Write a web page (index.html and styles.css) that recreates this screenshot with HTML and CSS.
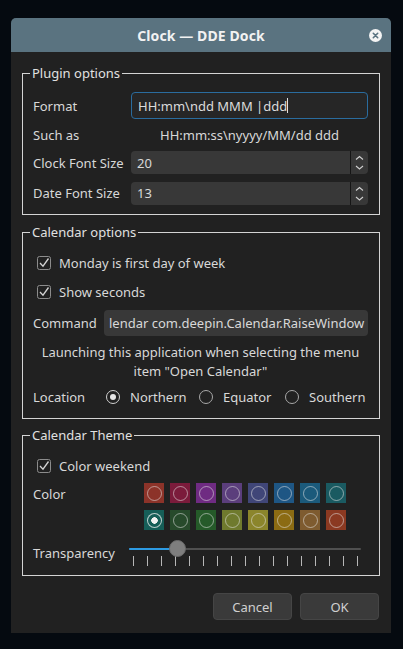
FILE: index.html
```html
<!DOCTYPE html>
<html>
<head>
<meta charset="utf-8">
<link rel="stylesheet" href="styles.css">
</head>
<body>
<div class="window">
  <div class="titlebar">
    <span></span>
    <span class="title">Clock — DDE Dock</span>
    <span class="close"><svg width="13" height="13" viewBox="0 0 13 13"><circle cx="6.5" cy="6.5" r="6.5" fill="#f4f4f4"/><path d="M4.3 4.3 L8.7 8.7 M8.7 4.3 L4.3 8.7" stroke="#5a7380" stroke-width="1.6" stroke-linecap="round"/></svg></span>
  </div>
  <div class="content">
    <fieldset class="group g1">
      <legend>Plugin options</legend>
      <div class="form">
        <span class="label">Format</span>
        <div class="field input focus">HH:mm\ndd MMM |ddd<span class="caret"></span></div>
        <span class="label">Such as</span>
        <div class="field example">HH:mm:ss\nyyyy/MM/dd ddd</div>
        <span class="label">Clock Font Size</span>
        <div class="field spin"><span class="val">20</span><span class="arrows"><svg width="17" height="23" viewBox="0 0 17 23"><path d="M5 8.5 L8.5 5.5 L12 8.5 M5 15 L8.5 18 L12 15" fill="none" stroke="#cfcfcf" stroke-width="1.1"/></svg></span></div>
        <span class="label">Date Font Size</span>
        <div class="field spin last"><span class="val">13</span><span class="arrows"><svg width="17" height="23" viewBox="0 0 17 23"><path d="M5 8.5 L8.5 5.5 L12 8.5 M5 15 L8.5 18 L12 15" fill="none" stroke="#cfcfcf" stroke-width="1.1"/></svg></span></div>
      </div>
    </fieldset>

    <fieldset class="group g2">
      <legend>Calendar options</legend>
      <div class="check first">
        <svg class="cb" width="14" height="14" viewBox="0 0 14 14"><rect x="0.5" y="0.5" width="13" height="13" rx="2" fill="none" stroke="#8c8c8c"/><path d="M3 7 L6 10.2 L11.5 2.5" fill="none" stroke="#d4d4d4" stroke-width="1.3"/></svg>
        <span>Monday is first day of week</span>
      </div>
      <div class="check second">
        <svg class="cb" width="14" height="14" viewBox="0 0 14 14"><rect x="0.5" y="0.5" width="13" height="13" rx="2" fill="none" stroke="#8c8c8c"/><path d="M3 7 L6 10.2 L11.5 2.5" fill="none" stroke="#d4d4d4" stroke-width="1.3"/></svg>
        <span>Show seconds</span>
      </div>
      <div class="cmdrow">
        <span class="label">Command</span>
        <div class="cmd">lendar com.deepin.Calendar.RaiseWindow</div>
      </div>
      <p class="desc">Launching this application when selecting the menu<br>item "Open Calendar"</p>
      <div class="location">
        <span class="label">Location</span>
        <span class="radio on"><span class="dot"></span>Northern</span>
        <span class="radio"><span class="dot"></span>Equator</span>
        <span class="radio"><span class="dot"></span>Southern</span>
      </div>
    </fieldset>

    <fieldset class="group g3">
      <legend>Calendar Theme</legend>
      <div class="check first">
        <svg class="cb" width="14" height="14" viewBox="0 0 14 14"><rect x="0.5" y="0.5" width="13" height="13" rx="2" fill="none" stroke="#8c8c8c"/><path d="M3 7 L6 10.2 L11.5 2.5" fill="none" stroke="#d4d4d4" stroke-width="1.3"/></svg>
        <span>Color weekend</span>
      </div>
      <div class="colorrow">
        <span class="label">Color</span>
        <div class="swatches">
          <span class="sw" style="background:#8c3329"></span>
          <span class="sw" style="background:#7b1b3b"></span>
          <span class="sw" style="background:#6f2b82"></span>
          <span class="sw" style="background:#5b3e7c"></span>
          <span class="sw" style="background:#404678"></span>
          <span class="sw" style="background:#1e5684"></span>
          <span class="sw" style="background:#1b5a7b"></span>
          <span class="sw" style="background:#1a5a61"></span>
          <span class="sw sel" style="background:#165e58"></span>
          <span class="sw" style="background:#274a2b"></span>
          <span class="sw" style="background:#255a29"></span>
          <span class="sw" style="background:#6f7a2d"></span>
          <span class="sw" style="background:#8b852b"></span>
          <span class="sw" style="background:#8b6b13"></span>
          <span class="sw" style="background:#7e5b2f"></span>
          <span class="sw" style="background:#8b3921"></span>
        </div>
      </div>
      <div class="transrow">
        <span class="label">Transparency</span>
        <div class="slider">
          <div class="track"><div class="groove"></div><div class="fill"></div><div class="handle"></div></div>
          <div class="ticks">
            <i></i><i></i><i></i><i></i><i></i><i></i><i></i><i></i><i></i><i></i><i></i><i></i><i></i><i></i><i></i><i></i><i></i>
          </div>
        </div>
      </div>
    </fieldset>

    <div class="buttons">
      <button class="btn">Cancel</button>
      <button class="btn">OK</button>
    </div>
  </div>
</div>
</body>
</html>
```
FILE: styles.css
```css
* { box-sizing: border-box; }
html, body { margin: 0; padding: 0; }
body {
  background: #050a10;
  font-family: "Noto Sans", sans-serif;
  font-size: 13px;
  color: #d8d8d8;
  width: 403px;
  height: 649px;
  overflow: hidden;
}
.window {
  margin: 18px 0 0 11px;
  width: 380px;
  height: 615px;
  background: #212121;
  border-radius: 5px 5px 0 0;
  overflow: hidden;
}
.titlebar {
  height: 34px;
  background: #5a7380;
  display: grid;
  grid-template-columns: 1fr auto 1fr;
  align-items: center;
}
.title {
  font-weight: bold;
  font-size: 14px;
  color: #f2f2f2;
  letter-spacing: 0.1px;
}
.close {
  justify-self: end;
  margin-right: 9px;
  display: flex;
  margin-top: 1px;
}
.content {
  padding: 12px 11px 12px 11px;
}
.group {
  margin: 0;
  border: 1px solid #d4d4d4;
  padding: 0 11px 0 10px;
  min-width: 0;
}
.group legend {
  padding: 0 2px;
  margin-left: -3px;
  height: 18px;
  line-height: 18px;
  color: #e0e0e0;
}
.label { color: #d8d8d8; line-height: 18px; }

/* group 1 */
.g1 { padding-top: 10px; padding-bottom: 10px; }
.form {
  display: grid;
  grid-template-columns: 98px 1fr;
  grid-template-rows: 27px 18px 23px 23px;
  row-gap: 7px;
  align-items: center;
}
.field { height: 100%; display: flex; align-items: center; }
.input {
  border: 1px solid #2a6c9e;
  border-radius: 4px;
  background: #262626;
  padding-left: 6px;
  color: #dcdcdc;
}
.caret { display: inline-block; width: 1px; height: 15px; background: #e0e0e0; margin-left: 0; }
.example { justify-content: center; line-height: 18px; }
.spin {
  background: #383838;
  border-radius: 4px;
  padding-left: 6px;
  overflow: hidden;
}
.spin.last { margin-top: 1px; height: 23px; }
.spin .val { flex: 1; }
.arrows {
  width: 18px;
  height: 100%;
  border-left: 1px solid #151515;
  display: flex;
}

/* group 2 */
.g2 { margin-top: 8px; padding-top: 13px; padding-bottom: 12px; }
.check {
  display: flex;
  align-items: center;
  height: 18px;
  padding-left: 4px;
}
.check .cb { margin-right: 8px; flex: none; }
.check.second { margin-top: 11px; }
.cmdrow {
  display: flex;
  align-items: center;
  margin-top: 9px;
  height: 26px;
}
.cmdrow .label { width: 71px; }
.cmd {
  flex: 1;
  height: 26px;
  background: #383838;
  border-radius: 4px;
  display: flex;
  align-items: center;
  padding-left: 5px;
  white-space: nowrap;
  overflow: hidden;
}
.desc {
  margin: 7px 0 0 0;
  text-align: center;
  line-height: 18.5px;
}
.location {
  display: grid;
  grid-template-columns: 73px 93px 86px auto;
  align-items: center;
  margin-top: 8px;
  height: 18px;
}
.radio { display: flex; align-items: center; line-height: 18px; }
.radio .dot {
  width: 14px; height: 14px;
  border: 1px solid #a8a8a8;
  border-radius: 50%;
  margin-right: 10px;
  display: flex; align-items: center; justify-content: center;
  flex: none;
}
.radio.on .dot { border-color: #d0d0d0; }
.radio.on .dot::after {
  content: "";
  width: 6px; height: 6px;
  border-radius: 50%;
  background: #e6e6e6;
}

/* group 3 */
.g3 { margin-top: 7px; padding-top: 13px; padding-bottom: 9px; }
.colorrow {
  display: flex;
  align-items: flex-start;
  margin-top: 8px;
}
.colorrow .label { width: 111px; margin-top: 2px; }
.swatches {
  display: grid;
  grid-template-columns: repeat(8, 20px);
  grid-auto-rows: 20px;
  column-gap: 6px;
  row-gap: 7px;
}
.sw {
  display: flex;
  align-items: center;
  justify-content: center;
}
.sw::before {
  content: "";
  width: 13px; height: 13px;
  border: 1px solid rgba(230,230,230,0.55);
  border-radius: 50%;
}
.sw.sel::before {
  border-color: rgba(240,240,240,0.75);
  background: radial-gradient(circle, #f2f2f2 0 3px, transparent 3.5px);
}
.transrow {
  display: flex;
  align-items: center;
  margin-top: 10px;
}
.transrow .label { width: 96px; margin-top: 0; }
.slider { width: 232px; }
.track { position: relative; height: 16px; }
.groove {
  position: absolute; left: 0; right: 0; top: 8px;
  height: 2px; background: #505050; border-radius: 1px;
}
.fill {
  position: absolute; left: 0; width: 48px; top: 8px;
  height: 2px; background: #2d9be3; border-radius: 1px;
}
.handle {
  position: absolute; left: 40px; top: 0;
  width: 17px; height: 17px; border-radius: 50%;
  background: #7e7e7e;
  border: 1px solid #6a6a6a;
}
.ticks {
  display: flex;
  justify-content: space-between;
  padding: 0 3px 0 4px;
  height: 10px;
  margin-top: 0;
}
.ticks i { display: block; width: 1px; height: 10px; background: #b8b8b8; }

.buttons {
  display: flex;
  justify-content: flex-end;
  gap: 8px;
  margin-top: 17px;
  padding-right: 1px;
}
.btn {
  width: 79px;
  height: 27px;
  background: #3a3a3a;
  border: 1px solid #454545;
  border-radius: 4px;
  color: #d0d0d0;
  font-family: "Noto Sans", sans-serif;
  font-size: 13px;
  padding: 0;
}
```
